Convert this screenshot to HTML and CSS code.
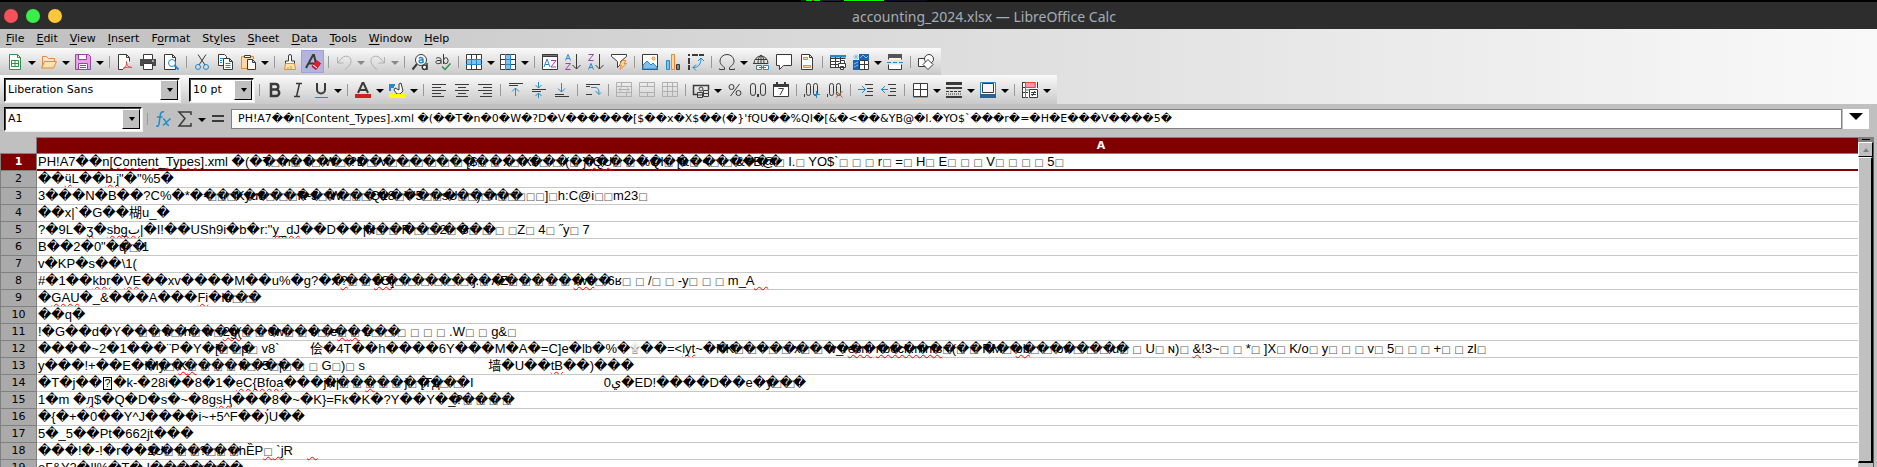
FILE: index.html
```html
<!DOCTYPE html>
<html lang="en">
<head>
<meta charset="utf-8">
<title>accounting_2024.xlsx — LibreOffice Calc</title>
<link rel="stylesheet" href="styles.css">
</head>
<body>
<div class="desktop-strip"><span class="mon mon-a"></span><span class="mon mon-b"></span><span class="mon mon-c"></span></div>
<header class="titlebar">
  <div class="lights"><button class="light red" aria-label="Close"></button><button class="light green" aria-label="Maximize"></button><button class="light yellow" aria-label="Minimize"></button></div>
  <div class="title">accounting_2024.xlsx — LibreOffice Calc</div>
</header>
<div class="chrome">
<nav class="menubar">
  <button><u>F</u>ile</button><button><u>E</u>dit</button><button><u>V</u>iew</button><button><u>I</u>nsert</button><button>F<u>o</u>rmat</button><button>St<u>y</u>les</button><button><u>S</u>heet</button><button><u>D</u>ata</button><button><u>T</u>ools</button><button><u>W</u>indow</button><button><u>H</u>elp</button>
</nav>
<div class="toolbar standard">
  <button class="tb" aria-label="New"><svg viewBox="0 0 16 16"><path class="gn" d="M2.5.5h8l3 3v12h-11z" fill="#fff"/><path class="gn" d="M10.500 .5v3h3M4.500 6.500h7v6h-7zM4.500 9.500h7M8 6.500v6"/></svg></button><button class="dd" aria-label="New options"></button>
  <button class="tb" aria-label="Open"><svg viewBox="0 0 16 16"><path class="or" d="M1.500 13.500v-11h4l2 2h6v3"/><path class="or" fill="#fbe3b0" d="M.5 14l3-6.500h12l-3 6.500z"/></svg></button><button class="dd" aria-label="Open options"></button>
  <button class="tb" aria-label="Save"><svg viewBox="0 0 16 16"><path class="pu" fill="#e2a6e2" d="M.5.5h13l2 2v13H.5z"/><path class="pu" fill="#fff" d="M3.500 .5h8v5h-8zM3.500 9.500h9v6h-9z"/><path class="pu" d="M5 11.500h6M5 13.500h6"/></svg></button><button class="dd" aria-label="Save options"></button>
  <span class="sep"></span>
  <button class="tb" aria-label="Export PDF"><svg viewBox="0 0 16 16"><path class="dk" fill="#fff" d="M6 15.500H1.500V.5h8l3 3v4M9.500 .5v3h3"/><path class="rd" d="M6 14.500c3-2 4-4 3.500-7 0 4 2 6 5.500 6-3-1-6 0-9 1z"/></svg></button>
  <button class="tb" aria-label="Print"><svg viewBox="0 0 16 16"><path class="dk" fill="#fff" d="M3.500 5V.5h9V5"/><path fill="#4a4a4a" d="M0 5h16v7H0z"/><path class="dk" fill="#fff" d="M3.500 9.500h9v6h-9z"/><path fill="#fff" d="M12 6.500h2v1h-2z"/></svg></button>
  <button class="tb" aria-label="Print Preview"><svg viewBox="0 0 16 16"><path class="dk" fill="#fff" d="M1.500 .5h8l3 3v12h-11zM9.500 .5v3h3"/><circle class="bl" cx="9" cy="9" r="3.500" fill="#fff"/><path class="bl w2" d="M11.500 11.500l4 4"/></svg></button>
  <span class="sep"></span>
  <button class="tb" aria-label="Cut"><svg viewBox="0 0 16 16"><path class="dk" d="M4 .5l7 10.500M12 .5L5 11"/><circle class="bl" cx="4" cy="13" r="2.500"/><circle class="bl" cx="12" cy="13" r="2.500"/></svg></button>
  <button class="tb" aria-label="Copy"><svg viewBox="0 0 16 16"><path class="dk" fill="#fff" d="M1.500 .5h6l2 2v9h-8z"/><path class="dk" fill="#fff" d="M6.500 4.500h6l3 3v8h-9zM12.500 4.500v3h3"/><path class="bl" d="M3 4.500h3M3 6.500h2M3 8.500h2M8.500 9.500h5M8.500 11.500h5M8.500 13.500h5"/></svg></button>
  <button class="tb" aria-label="Paste"><svg viewBox="0 0 16 16"><path class="or" fill="#fdd9a0" d="M7 14.500H1.500v-12h12V5"/><path class="dk" fill="#fff" d="M4.500 3.500v-2h6v2zM7.500 5.500h5l3 3v7h-8zM12.500 5.500v3h3"/></svg></button><button class="dd" aria-label="Paste options"></button>
  <span class="sep"></span>
  <button class="tb" aria-label="Clone Formatting"><svg viewBox="0 0 16 16"><path class="dk" fill="#fff" d="M6.500 7V2a1.500 1.500 0 0 1 3 0v5h3v3h-9V7z"/><path class="or" fill="#fbe3b0" d="M3.500 9.500h9l1 6h-11zM6 13v2M9 12v3"/></svg></button>
  <button class="tb on" aria-label="Clear Direct Formatting" aria-pressed="true"><svg viewBox="0 0 16 16"><path class="dk w2" d="M1 14L8 1h1l2 9M4 9.500h5"/><path fill="#e0242c" stroke="#b01018" d="M7 12.500l4.500-6 4 3-4.500 6z"/><path d="M8 11l4 3" stroke="#fff"/></svg></button>
  <span class="sep"></span>
  <button class="tb" aria-label="Undo"><svg viewBox="0 0 16 16"><path class="gy" d="M1.500 3v6h6M1.500 9L6 4c4-4 10-1 9 4-.5 3-3 5-6 7.500"/></svg></button><button class="dd off" aria-label="Undo list"></button>
  <button class="tb" aria-label="Redo"><svg viewBox="0 0 16 16"><path class="gy" d="M14.500 3v6h-6M14.500 9L10 4C6 0 0 3 1 8c.5 3 3 5 6 7.500"/></svg></button><button class="dd off" aria-label="Redo list"></button>
  <span class="sep"></span>
  <button class="tb" aria-label="Find and Replace"><svg viewBox="0 0 16 16"><path class="dk w2" d="M5 10L.5 15.500"/><circle class="dk" cx="9" cy="6" r="5.500" fill="#fff"/><path class="bl" stroke-width="1.500" d="M7 4.500c1-1.300 4-1.300 4 1V9M11 6H9C6.500 6 6.500 8.800 8.500 8.800 10 8.800 11 8 11 7"/><path class="dk" stroke-width="1.500" d="M15 9v7"/><circle class="dk" stroke-width="1.500" cx="12.500" cy="13.300" r="2.200" fill="#fff"/></svg></button>
  <button class="tb" aria-label="Spelling"><svg viewBox="0 0 16 16"><path class="dk" d="M1 4.500c1-1.300 5-1.300 5 1V10M6 6.500H3C.2 6.500 .2 9.700 2.700 9.700 4.500 9.700 6 9 6 7.500M8.500 0v10"/><ellipse class="dk" cx="10.800" cy="6.700" rx="2.300" ry="3" fill="none"/><path class="gn" stroke-width="1.500" d="M7 12.500l3 3 5.500-6"/></svg></button>
  <span class="sep"></span>
  <button class="tb" aria-label="Row"><svg viewBox="0 0 16 16"><path fill="#fff" d="M.5.5h15v15H.5z"/><path fill="#83beec" d="M0 5h16v6H0z"/><path class="dk" d="M.5.5h15v15H.5zM5.500 0v16M10.500 0v16"/><path class="bl" d="M0 5.500h16M0 10.500h16M5.500 5v6M10.500 5v6"/></svg></button><button class="dd" aria-label="Row options"></button>
  <button class="tb" aria-label="Column"><svg viewBox="0 0 16 16"><path fill="#fff" d="M.5.5h15v15H.5z"/><path fill="#83beec" d="M5 0h6v16H5z"/><path class="dk" d="M.5.5h15v15H.5zM0 5.500h16M0 10.500h16"/><path class="bl" d="M5.500 0v16M10.500 0v16M5 5.500h6M5 10.500h6"/></svg></button><button class="dd" aria-label="Column options"></button>
  <span class="sep"></span>
  <button class="tb" aria-label="Sort"><svg viewBox="0 0 16 16"><path class="dk" fill="#fff" d="M.5.5h15v15H.5z"/><path fill="#777" stroke="#3a3a38" d="M.5.5h15v2H.5z"/><path class="bl" d="M2 13l3-8 3 8M3 10.500h4"/><path class="pu" d="M9 6.500h5l-5 6.500h5"/></svg></button>
  <button class="tb" aria-label="Sort Ascending"><svg viewBox="0 0 16 16"><path class="bl" d="M.5 6.500L3 .5l2.500 6M1.500 4.500h3"/><path class="pu" d="M.5 9.500h5l-5 6h5"/><path class="dk" d="M11.500 0v15M7.500 11l4 4 4-4"/></svg></button>
  <button class="tb" aria-label="Sort Descending"><svg viewBox="0 0 16 16"><path class="pu" d="M.5.5h5l-5 6h5"/><path class="bl" d="M.5 15.500L3 9.500l2.500 6M1.500 13.500h3"/><path class="dk" d="M11.500 0v15M7.500 11l4 4 4-4"/></svg></button>
  <button class="tb" aria-label="AutoFilter"><svg viewBox="0 0 16 16"><path class="dk" fill="#fff" d="M.5.5h15v2l-6 5v3l-3 3v-6l-6-5z"/><path class="or" fill="#fdd9a0" d="M11 6.500h4l-2 3h2.500L9 15.500l1.500-4.500H8.500z"/></svg></button>
  <span class="sep"></span>
  <button class="tb" aria-label="Image"><svg viewBox="0 0 16 16"><path class="dk" fill="#fff" d="M.5.5h15v15H.5z"/><path class="bl" fill="#83beec" d="M1 11l4-4 4 4 2-2 4 4v2H1z"/><circle class="or" cx="11.500" cy="4.500" r="1.500" fill="#fdd9a0"/></svg></button>
  <button class="tb" aria-label="Chart"><svg viewBox="0 0 16 16"><path class="bl" fill="#83beec" d="M1.500 6.500h3v9h-3z"/><path class="or" fill="#fdd9a0" d="M6.500 .5h3v15h-3z"/><path class="dk" fill="#888" d="M11.500 10.500h3v5h-3z"/></svg></button>
  <button class="tb" aria-label="Pivot Table"><svg viewBox="0 0 16 16"><path class="dk w2" d="M0 1h2M4 1h12M1 4v12" stroke-dasharray="6 1"/><path class="bl" d="M5 13.500c5 0 8-3 8-9M10 7l3-3 3 3M8 10.500l-3 3 3 3"/></svg></button>
  <span class="sep"></span>
  <button class="tb" aria-label="Special Character"><svg viewBox="0 0 16 16"><path class="dk" d="M.5 14.500v1h5v-2C2 11 1 9 1 7a7 6.500 0 0 1 14 0c0 2-1 4-4.500 6.500v2h5v-1"/></svg></button><button class="dd" aria-label="Special characters list"></button>
  <button class="tb" aria-label="Hyperlink"><svg viewBox="0 0 16 16"><path class="dk" d="M1 9.500a7 7.500 0 0 1 14 0M8 1v9M5 9.500C5 5 6 2 8 1c2 1 3 4 3 8.500M2 5.500h12M0 9.500h15"/><path class="bl" fill="#fff" d="M3.500 11.500h5v4h-5zM10.500 11.500h5v4h-5z"/><path class="bl" d="M6 13.500h7"/></svg></button>
  <button class="tb" aria-label="Comment"><svg viewBox="0 0 16 16"><path class="dk" fill="#fff" d="M.5.5h15v11h-8l-4 4v-4h-3z"/></svg></button>
  <button class="tb" aria-label="Headers and Footers"><svg viewBox="0 0 16 16"><path class="dk" fill="#fff" d="M2.500 .5h8l3 3v12h-11zM10.500 .5v3h3"/><path class="or" fill="#fdd9a0" d="M4.500 3.500h4v2h-4zM4.500 11.500h7v2h-7z"/></svg></button>
  <span class="sep"></span>
  <button class="tb" aria-label="Print Area"><svg viewBox="0 0 16 16"><path fill="#fff" d="M.5 1.500h15v12H.5z"/><path fill="#83beec" d="M0 1h16v3H0z"/><path class="dk" d="M.5 4.500h15M.5 7.500h9M.5 10.500h8M.5 13.500h8M.5 2v12M5.500 2v12M10.500 2v5"/><path class="bl w2" d="M0 2h16"/><path class="dk" fill="#fff" d="M10.500 6.500h4v3h-4zM8.500 9.500h7v4h-7zM10.500 12.500h3v3h-3z"/></svg></button>
  <button class="tb" aria-label="Freeze Rows and Columns"><svg viewBox="0 0 16 16"><path fill="#fff" d="M.5.5h15v15H.5z"/><path fill="#1867b4" d="M6 0h10v6H6zM0 6h6v10H0z"/><path class="dk" d="M6.500 6.500h9v9h-9zM6.500 10.500h9M11.500 6.500v9"/><path class="lb" d="M3 0v6M0 3h6M1 1l4 4M5 1L1 5M7 4l3-3 3 3 2-2M1 10l4-2M1 13l4-2"/></svg></button><button class="dd" aria-label="Freeze options"></button>
  <button class="tb" aria-label="Split Window"><svg viewBox="0 0 16 16"><path class="dk" fill="#fff" d="M1.500 5.500v-5h13v5M1.500 10.500v5h13v-5"/><path fill="#555" d="M1 0h14v4H1z"/><path class="bl" d="M0 8.500h4M6 8.500h4M12 8.500h4"/></svg></button>
  <span class="sep"></span>
  <button class="tb" aria-label="Draw Functions"><svg viewBox="0 0 16 16"><path class="dk" fill="#fff" d="M.5 4.500h9v8h-9z"/><circle class="dk" cx="11" cy="5" r="4.500" fill="#fff"/><path class="dk" fill="#fff" d="M10 5.500l5 5-5 5-5-5z"/></svg></button>
</div>
<div class="toolbar formatting">
  <span class="combo font"><select aria-label="Font Name"><option>Liberation Sans</option></select></span>
  <span class="combo size"><select aria-label="Font Size"><option>10 pt</option></select></span>
  <span class="sep"></span>
  <button class="tb" aria-label="Bold"><svg viewBox="0 0 16 16"><path d="M4 2h4.500a2.800 2.800 0 0 1 0 5.600H4zM4 7.600h5a3.200 3.200 0 0 1 0 6.400H4z" fill="none" stroke="#3a3a38" stroke-width="2.500"/></svg></button>
  <button class="tb" aria-label="Italic"><svg viewBox="0 0 16 16"><path class="dk" d="M6 1.500h6M4 14.500h6M9.500 1.500l-3 13" stroke-width="1.500"/></svg></button>
  <button class="tb" aria-label="Underline"><svg viewBox="0 0 16 16"><path class="dk w2" d="M4 1v6.500a4 4 0 0 0 8 0V1"/><path class="bl" d="M2 15.500h13"/></svg></button><button class="dd" aria-label="Underline options"></button>
  <span class="sep"></span>
  <button class="tb" aria-label="Font Color"><svg viewBox="0 0 16 16"><path class="dk w2" d="M3 11L7.500 1h1L13 11M5 8h6"/><path fill="#cf1f1f" d="M0 12h16v4H0z"/></svg></button><button class="dd" aria-label="Font color options"></button>
  <button class="tb" aria-label="Background Color"><svg viewBox="0 0 16 16"><path class="bl w2" d="M1 9V3h5M1 5h4"/><path class="dk" fill="#fff" d="M6 6l4 2V2l2-1 1 4 1 4-3 3H8L5 8z"/><path fill="#ffff00" d="M0 12h16v4H0z"/></svg></button><button class="dd" aria-label="Background color options"></button>
  <span class="sep"></span>
  <button class="tb" aria-label="Align Left"><svg viewBox="0 0 16 16"><path class="dk" d="M1 2.500h14M1 5.500h9M1 8.500h14M1 11.500h9M1 14.500h12"/></svg></button>
  <button class="tb" aria-label="Center"><svg viewBox="0 0 16 16"><path class="dk" d="M1 2.500h14M4 5.500h8M1 8.500h14M4 11.500h8M2 14.500h12"/></svg></button>
  <button class="tb" aria-label="Align Right"><svg viewBox="0 0 16 16"><path class="dk" d="M1 2.500h14M6 5.500h9M1 8.500h14M6 11.500h9M3 14.500h12"/></svg></button>
  <span class="sep"></span>
  <button class="tb" aria-label="Align Top"><svg viewBox="0 0 16 16"><path class="dk" d="M1 1.500h14M1 3.500h9"/><path class="bl" d="M7.500 14V6M4 9.500L7.500 6 11 9.500"/></svg></button>
  <button class="tb" aria-label="Center Vertically"><svg viewBox="0 0 16 16"><path class="dk" d="M1 7.500h14M1 9.500h9"/><path class="bl" d="M7.500 0v6M4.500 3l3 3 3-3M7.500 16v-5M4.500 14l3-3 3 3"/></svg></button>
  <button class="tb" aria-label="Align Bottom"><svg viewBox="0 0 16 16"><path class="dk" d="M1 12.500h9M1 14.500h14"/><path class="bl" d="M7.500 1v9M4 6.500l3.500 3.500L11 6.500"/></svg></button>
  <span class="sep"></span>
  <button class="tb" aria-label="Wrap Text"><svg viewBox="0 0 16 16"><path class="dk" d="M1 2.500h14M1 4.500h4M1 12.500h6"/><path class="bl" d="M6 5.500h4c3 0 4 2 4 6M10.500 9l3.500 3.500 2-2"/></svg></button>
  <span class="sep"></span>
  <button class="tb" aria-label="Merge and Center" disabled><svg viewBox="0 0 16 16"><path class="gy" d="M.5.500h15v14H.5zM.5 4.500h15M.5 10.500h15M5.500 0v4M10.500 10v5M3 7.500h10M5 5.500l-2 2 2 2M11 5.500l2 2-2 2"/></svg></button>
  <button class="tb" aria-label="Merge Cells" disabled><svg viewBox="0 0 16 16"><path class="gy" d="M.5.500h15v14H.5zM.5 4.500h15M.5 10.500h15M8.500 0v4M8.500 10v5"/></svg></button>
  <button class="tb" aria-label="Unmerge Cells" disabled><svg viewBox="0 0 16 16"><path class="gy" d="M.5.500h15v14H.5zM.5 4.500h15M.5 9.500h15M5.500 0v15M10.500 0v15"/></svg></button>
  <span class="sep"></span>
  <button class="tb" aria-label="Format as Currency"><svg viewBox="0 0 16 16"><path class="dk" d="M5 12.500H.5v-9h15V8" stroke-width="1.500"/><circle cx="8" cy="7" r="2" class="dk"/><path class="dk" fill="#ddd" d="M4.500 10.500h5v5h-5zM10.500 8.500h5v6h-5zM4.500 13h5M10.500 11.500h5"/></svg></button><button class="dd" aria-label="Currency options"></button>
  <button class="tb" aria-label="Format as Percent"><svg viewBox="0 0 16 16"><path class="dk" d="M12.500 2l-9 12"/><circle class="dk" cx="4.500" cy="5" r="2.500"/><circle class="dk" cx="11.500" cy="11" r="2.500"/></svg></button>
  <button class="tb" aria-label="Format as Number"><svg viewBox="0 0 16 16"><rect class="dk" x=".5" y="1.500" width="5" height="12" rx="2.500"/><rect class="dk" x="10.500" y="1.500" width="5" height="12" rx="2.500"/><path fill="#3a3a38" d="M7 12h2v3H7z"/></svg></button>
  <button class="tb" aria-label="Format as Date"><svg viewBox="0 0 16 16"><path class="dk" fill="#fff" d="M.5 2.500h15v12H.5z"/><path fill="#3a3a38" d="M0 2h16v3H0zM3 0h2v3H3zM11 0h2v3h-2z"/><path class="dk" d="M5.500 6.500h5L7 13"/></svg></button>
  <span class="sep"></span>
  <button class="tb" aria-label="Add Decimal Place"><svg viewBox="0 0 16 16"><rect class="dk" x="2.500" y="1.500" width="4" height="12" rx="2"/><rect class="dk" x="9.500" y="1.500" width="4" height="12" rx="2"/><path fill="#3a3a38" d="M0 12h1v3H0z"/><path class="bl" d="M9 12.500h7M12.500 9v7"/></svg></button>
  <button class="tb" aria-label="Delete Decimal Place"><svg viewBox="0 0 16 16"><rect class="dk" x="2.500" y="1.500" width="4" height="12" rx="2"/><rect class="dk" x="9.500" y="1.500" width="4" height="12" rx="2"/><path fill="#3a3a38" d="M0 12h1v3H0z"/><path class="rd" d="M9 9l6.500 6.500M15.500 9L9 15.500"/></svg></button>
  <span class="sep"></span>
  <button class="tb" aria-label="Increase Indent"><svg viewBox="0 0 16 16"><path class="dk" d="M7 2.500h8M9 6.500h6M9 9.500h6M7 13.500h8"/><path class="bl" d="M0 7.500h7M4 4l3.500 3.500L4 11"/></svg></button>
  <button class="tb" aria-label="Decrease Indent"><svg viewBox="0 0 16 16"><path class="dk" d="M7 2.500h8M9 6.500h6M9 9.500h6M7 13.500h8"/><path class="bl" d="M0 7.500h7M4 4L.5 7.500 4 11"/></svg></button>
  <span class="sep"></span>
  <button class="tb" aria-label="Borders"><svg viewBox="0 0 16 16"><path class="dk" fill="#fff" d="M1.500 1.500h14v13h-14zM8.500 1v14M1 7.500h14"/><path class="or" d="M1 15.500h15"/></svg></button><button class="dd" aria-label="Borders options"></button>
  <button class="tb" aria-label="Border Style"><svg viewBox="0 0 16 16"><path fill="#3a3a38" d="M0 0h16v3H0zM0 5h16v2H0zM0 14h16v2H0z"/><path class="dk" d="M0 9.500h16" stroke-dasharray="3 1"/><path class="dk" d="M0 12h16" stroke-dasharray="1 1"/></svg></button><button class="dd" aria-label="Border style options"></button>
  <button class="tb" aria-label="Border Color"><svg viewBox="0 0 16 16"><path class="bl" fill="#fff" d="M.5.500h15v12H.5z"/><path class="dk" fill="#f4f4f4" d="M2.500 1.500h11v9h-11z"/><path fill="#2a6099" d="M0 12h16v4H0z"/></svg></button><button class="dd" aria-label="Border color options"></button>
  <span class="sep"></span>
  <button class="tb" aria-label="Conditional"><svg viewBox="0 0 16 16"><path fill="#fff" d="M.5.500h15v15H.5z"/><path fill="#ff9aa2" d="M3 0h11v6H3z"/><path class="dk" d="M.5 0v16M15.500 0v6M0 5.500h5M0 10.500h6M0 15.500h6M0 .5h3"/><path class="rd" d="M3.500 0v16M3 .5h10M13 0v6M3 5.500h10"/><path class="gn" d="M4 8h3"/><path class="dk" fill="#fff" d="M7.500 7.500h8v8h-8zM9 10.500h5M9 12.500h5M13 9l-3 5"/></svg></button><button class="dd" aria-label="Conditional options"></button>
</div>
</div>
<div class="formulabar">
  <span class="combo name"><input type="text" value="A1" aria-label="Name Box"></span>
  <span class="sep"></span>
  <button class="fb" aria-label="Function Wizard"><svg viewBox="0 0 16 16"><path class="bl" stroke-width="1.500" d="M1 15.500c3 0 3-2 3.500-6L5.500 3C6 1 7 .5 9 .8M2 6h5.500M8 8c3-1 2 6 6 6.500M15.500 7.500L8 14.500"/></svg></button>
  <button class="fb" aria-label="Select Function"><svg viewBox="0 0 16 16"><path class="dk" stroke-width="1.500" d="M14 4V1H2l6 6.500L2 15h12v-3"/></svg></button><button class="dd" aria-label="Select function options"></button>
  <button class="fb" aria-label="Formula"><svg viewBox="0 0 16 16"><path fill="#3a3a38" d="M2 4h12v2H2zM2 9h12v2H2z"/></svg></button>
  <input class="formula" type="text" aria-label="Input line" value="PH!A7��n[Content_Types].xml �(��T�n�0�W�?D�V������[$��x�X$��(�}'fQU��%QI�[&amp;�&lt;��&amp;YB@�I.�YO$`���r�=�H�E���V����5�">
  <button class="expand" aria-label="Expand Formula Bar"></button>
</div>
<main class="sheet">
<div class="view">
<table class="grid">
<colgroup><col class="rowhead"><col class="col-a"></colgroup>
<thead><tr><th class="corner"></th><th class="colhead" scope="col">A</th></tr></thead>
<tbody>
<tr class="current"><th scope="row">1</th><td>PH!A7��n[<s>Content_Types</s>].xml �(�<b>T<i>□</i> n<i>□</i> 0<i>□</i> W<i>□</i> ?D<i>□</i> V<i>□</i> <i>□</i> <i>□</i> <i>□</i> <i>□</i> <i>□</i> [$<i>□</i> <i>□</i> x<i>□</i> X$<i>□</i> <i>□</i> (<i>□</i> }'<s>fQU</s><i>□</i> <i>□</i> %QI<i>□</i> [&amp;<i>□</i> &lt;<i>□</i> <i>□</i> &amp;YB@<i>□</i> I.<i>□</i> YO$`<i>□</i> <i>□</i> <i>□</i> r<i>□</i> =<i>□</i> H<i>□</i> E<i>□</i> <i>□</i> <i>□</i> V<i>□</i> <i>□</i> <i>□</i> <i>□</i> 5<i>□</i></b>���������������������������������������</td></tr>
<tr><th scope="row">2</th><td>��<s>ӵ</s>L��<s>b.j</s>"�"%5�</td></tr>
<tr><th scope="row">3</th><td>3���N�B��?C%�*�<b>-<i>□</i><i>□</i><i>□</i>Kyu8<i>□</i>.<i>□</i><i>□</i>R-J<i>□</i>'W<i>□</i><i>□</i><i>□</i>Q18<i>□</i>V'5<i>□</i><i>□</i>sU<i>□</i><i>□</i>)<i>□</i>h<i>□</i><i>□</i><i>□</i><i>□</i><i>□</i>]<i>□</i>h:C@i<i>□</i><i>□</i>m23<i>□</i></b>������������������������</td></tr>
<tr><th scope="row">4</th><td>��x|`�G��楜u_�</td></tr>
<tr><th scope="row">5</th><td>?�9L�<s>ʒ</s>�<s>sbg</s><s>ٮ</s>|�I!��USh9i�b�r:"<s>y_dJ</s>��D��<b>|N<i>□</i> <i>□</i> R'<i>□</i> <i>□</i> 2<i>□</i> S<i>□</i> <i>□</i> <i>□</i> <i>□</i>Z<i>□</i> 4<i>□</i> ˝y<i>□</i> 7</b>����������</td></tr>
<tr><th scope="row">6</th><td>B��2�0"�<b>q'<i>□</i> 1</b>��</td></tr>
<tr><th scope="row">7</th><td>v�KP�s��\1(</td></tr>
<tr><th scope="row">8</th><td>#�1��<s>kbr</s>�<s>VE</s>��xv����M��u%�g?�<b>x'<s>?</s><i>□</i> <i>□</i> <s>JO]</s><i>□</i> <i>□</i> <i>□</i> <i>□</i> <i>□</i> <i>□</i> j.<i>□</i> AZ<i>□</i> <i>□</i> <i>□</i> <i>□</i> <i>□</i> <s>rwe</s><i>□</i> 6ʁ<i>□</i> <i>□</i> /<i>□</i> <i>□</i> -y<i>□</i> <i>□</i> <i>□</i> m_A<s>    </s></b>���������������������</td></tr>
<tr><th scope="row">9</th><td>�<s>GAU</s>�_&amp;���A���<s>Fi</s>�<b>lu<i>□</i> <i>□</i></b>���</td></tr>
<tr><th scope="row">10</th><td>��q�</td></tr>
<tr><th scope="row">11</th><td>!�G��d�Y�<b> <i>□</i> <i>□</i> k<i>□</i> h<i>□</i> w<i>□</i><s>2g(</s><i>□</i> <i>□</i> 0w<i>□</i> <i>□</i> s<i>□</i> e<s><i>□</i> <i>□</i></s> L<i>□</i> <i>□</i> <i>□</i> <i>□</i> <i>□</i> <i>□</i> .W<i>□</i> <i>□</i> g&amp;<i>□</i></b>��������������������</td></tr>
<tr><th scope="row">12</th><td>����~2�1���¨P�Y�<b>[<i>□</i> <i>□</i>p<i>□</i> v8`</b>���<span class="gap gap-s"></span>侩�4T��h����6Y���M�A�=C]e�lb�%�<em>۩</em>��=&lt;<s>lyt</s>~�<b>NK<i>□</i> <i>□</i> &gt;<i>□</i> <i>□</i> x<i>□</i> <i>□</i> w_r<s>esm</s> <s>nbock</s><s>.mnfs</s><i>□</i>(<i>□</i> <i>□</i> RM<i>□</i> <s>ob</s><i>□</i> <i>□</i> ow<i>□</i> <i>□</i> <i>□</i> u<i>□</i> <i>□</i> U<i>□</i> ɴ)<i>□</i> <s>&amp;</s>!3~<i>□</i> <i>□</i> *<i>□</i> ]X<i>□</i> K/o<i>□</i> y<i>□</i> <i>□</i> <i>□</i> v<i>□</i> 5<i>□</i> <i>□</i> <i>□</i> +<i>□</i> <i>□</i> zl<i>□</i></b>�������������������������������</td></tr>
<tr><th scope="row">13</th><td>y���!+��E�<b>IMy<i>□</i> <s>K<i>□</i></s> <i>□</i> <i>□</i> <i>□</i> h<i>□</i> '5<i>□</i>|<i>□</i> <i>□</i> <i>□</i> G<i>□</i>)<i>□</i> s</b>������������<span class="gap gap-l"></span>墙�U��<s>tB</s>��)���</td></tr>
<tr><th scope="row">14</th><td>�T�j��<span class="hex">?</span>�k-�28i��8�1�<s>eC{Bfoa</s>���<b>jN|<i>□</i> <i>□</i> <s><i>□</i></s> <i>□</i> <i>□</i> j<i>□</i> [Тд<i>□</i> <i>□</i></b>�����������I<span class="gap gap-m"></span>0<bdi>ي</bdi>�ED!����D��e�<b>y<i>□</i> <i>□</i></b>���</td></tr>
<tr><th scope="row">15</th><td>1�m �<s>ԓ</s>$�Q�D�s�~�8g<s>sⱧ</s>���8�~�K}=Ϝk�K�?Y��Y�<b>_?<i>□</i> <i>□</i> <i>□</i> <i>□</i></b>�����</td></tr>
<tr><th scope="row">16</th><td>�{�+�0��Y^J����i~+5^F��)́U��</td></tr>
<tr><th scope="row">17</th><td>5�_5��Pt�662jt���</td></tr>
<tr><th scope="row">18</th><td>���!�-!�r��<b>2U<i>□</i> <i>□</i> <i>□</i>?<i>□</i><i>□</i> <i>□</i>hȄP<s><i>□</i> `j</s>R<span class="gap gap-xs"></span><s>   </s></b>�������</td></tr>
<tr><th scope="row">19</th><td>eГ&amp;Y2�!l%�T�.!�<b><i>□</i> <i>□</i> x<i>□</i><i>□</i><i>□</i></b>������</td></tr>
</tbody>
</table>
</div>
<div class="scroll"><div class="split"></div><button class="up" aria-label="Scroll up"></button><div class="thumb"></div><div class="rest"></div></div>
</main>
</body>
</html>
```
FILE: styles.css
```css
* { box-sizing: border-box; }
body { margin: 0; height: 100vh; overflow: hidden; display: flex; flex-direction: column; background: #c0c0c0; color: #000; font-family: "DejaVu Sans", sans-serif; font-size: 11px; }
button { border: 0; padding: 0; margin: 0; background: none; font: inherit; color: inherit; }
input, select { font: inherit; color: inherit; border-radius: 0; margin: 0; }

.desktop-strip { height: 2px; flex: none; background: #000; display: flex; gap: 3px; padding-left: 801px; }
.mon { height: 1px; width: 40px; background: #222; }
.mon-a { background: linear-gradient(90deg, #222 5px, #0f0 5px 11px, #a22 11px 13px, #0f0 13px 19px, #222 19px); }
.mon-b { background: #0f0; }
.mon-c { background: #0a0a20; }

.titlebar { flex: none; height: 27px; display: flex; align-items: center; background: #2d2d2d; }
.lights { width: 91px; padding-left: 4px; display: flex; gap: 8px; }
.light { width: 14px; height: 14px; border-radius: 50%; }
.red { background: #f9505a; }
.green { background: #3bef4b; }
.yellow { background: #fec63a; }
.title { flex: 1; text-align: center; font-family: "Noto Sans", sans-serif; font-size: 14px; line-height: 26px; padding-top: 2px; color: #a2adb7; }

.chrome { flex: none; display: flex; flex-direction: column; align-items: flex-start; background: linear-gradient(90deg, #c0c0c0, #f9f9f9); }
.menubar { display: flex; gap: 12px; height: 19px; padding-left: 6px; line-height: 18px; }
.menubar u { text-underline-offset: 2px; }

.toolbar { display: flex; align-items: center; background: linear-gradient(#fafafa, #c9c9c9); }
.standard { height: 27px; padding: 0 4px 0 3px; }
.formatting { height: 29px; padding: 0 5px 0 4px; }
.tb { width: 23px; height: 23px; display: grid; place-items: center; flex: none; }
.tb svg { width: 16px; height: 16px; overflow: visible; }
.on { background: #b4b3dc; border: 1px solid #a09fe0; }
.dd { width: 11px; height: 23px; flex: none; display: grid; place-items: center; }
.dd::after { content: ""; border: 4px solid transparent; border-top-color: #000; border-bottom: 0; margin-top: 3px; }
.off::after { border-top-color: #888; }
.sep { width: 8px; height: 12px; flex: none; display: flex; justify-content: center; }
.sep::after { content: ""; width: 1px; background: #999; }

svg [class]:not([fill]) { fill: none; }
.dk { stroke: #3a3a38; }
.bl { stroke: #1e8bcd; }
.lb { stroke: #83beec; }
.gn { stroke: #309048; }
.or { stroke: #ed8733; }
.pu { stroke: #a33dab; }
.rd { stroke: #e8453c; }
.gy { stroke: #b0b0b0; }
.w2 { stroke-width: 2; }

.combo { position: relative; height: 24px; background: #fff; border: 1px solid #000; border-right-color: #fff; border-bottom-color: #fff; box-shadow: inset 1px 1px #444, 1px 1px #eee; flex: none; }
.combo select, .combo input { appearance: none; width: 100%; height: 100%; border: 0; padding: 0 3px; background: none; outline: 0; }
.combo::before { content: ""; position: absolute; right: 1px; top: 1px; bottom: 1px; width: 16px; background: #c0c0c0; border: 1px solid #fff; border-right-color: #000; border-bottom-color: #000; }
.combo::after { content: ""; position: absolute; right: 6px; top: 9px; border: 3px solid transparent; border-top: 4px solid #000; border-bottom: 0; }
.font { width: 176px; margin-right: 9px; }
.size { width: 65px; margin-right: 1px; }
.name { width: 138px; }

.formulabar { flex: none; display: flex; align-items: center; height: 33px; padding: 0 8px 4px 4px; }
.fb { width: 22px; height: 22px; flex: none; display: grid; place-items: center; }
.fb svg { width: 16px; height: 16px; }
.formula { flex: 1; height: 20px; border: 1px solid #808080; background: #fff; padding: 0 6px 1px; outline: 0; margin-left: 2px; }
.formulabar .sep { margin: 0 1px; }
.expand { width: 26px; height: 20px; background: #fff; display: grid; place-items: center; padding-bottom: 4px; margin-left: 1px; }
.expand::after { content: ""; border: 7px solid transparent; border-top-color: #000; border-bottom: 0; }

.sheet { flex: 1; min-height: 0; display: flex; overflow: hidden; align-items: stretch; }
.view { flex: 1; min-width: 0; overflow: hidden; background: #fff; }
.grid { width: 2165px; border-collapse: separate; border-spacing: 0; table-layout: fixed; background: #fff; }
.rowhead { width: 37px; }
.grid th { padding: 0; height: 17px; font-size: 11px; font-weight: normal; line-height: 16px; background: #aaa; border-right: 1px solid #808080; border-bottom: 1px solid #808080; border-left: 1px solid #808080; }
.grid .corner { height: 17px; line-height: 15px; background: #c0c0c0; border-left: 0; }
.grid .colhead { height: 17px; line-height: 14px; background: #800000; color: #fff; font-weight: bold; border: 0; border-top: 1px solid #808080; border-bottom: 1px solid #808080; }
.grid .current th { background: #800000; color: #fff; font-weight: bold; }
.grid td { height: 17px; padding: 0 0 0 1px; border-bottom: 1px solid #c8c8c8; font-family: "Liberation Sans", "DejaVu Sans", "Noto Sans CJK SC", sans-serif; font-size: 13px; line-height: 16px; white-space: pre; overflow: hidden; }
.grid .current td { border-bottom: 2px solid #800000; line-height: 15px; }
.grid td b { position: absolute; font-weight: normal; }
.grid td i { font: 10px "DejaVu Sans", sans-serif; line-height: 1px; color: #555; }
.grid td em { font-style: normal; color: #999; }
.grid td s { text-decoration: underline wavy #f00 1px; text-underline-offset: 1px; text-decoration-skip-ink: none; }
.hex { border: 1px solid #000; margin: 0 1px; font-size: 11px; line-height: 11px; display: inline-block; width: 9px; text-align: center; }
.gap { display: inline-block; }
.gap-xs { width: 14px; }
.gap-s { width: 55px; }
.gap-m { width: 130px; }
.gap-l { width: 184px; }

.scroll { flex: none; width: 19px; display: flex; flex-direction: column; border-right: 3px solid #c0c0c0; box-shadow: inset -1px 0 #555; background: #c0c0c0; }
.split { height: 5px; background: linear-gradient(#000, #000) 4px 2px / 8px 1px no-repeat, #808080; }
.up { height: 15px; width: 15px; border: 1px solid #fff; border-right-color: #000; border-bottom-color: #000; display: grid; place-items: center; }
.up::after { content: ""; border: 3px solid transparent; border-bottom: 4px solid #808080; border-top: 0; }
.thumb { flex: 1; width: 15px; border: 1px solid #fff; border-right: 2px solid #000; border-bottom: 2px solid #000; }
.rest { height: 4px; }
```
